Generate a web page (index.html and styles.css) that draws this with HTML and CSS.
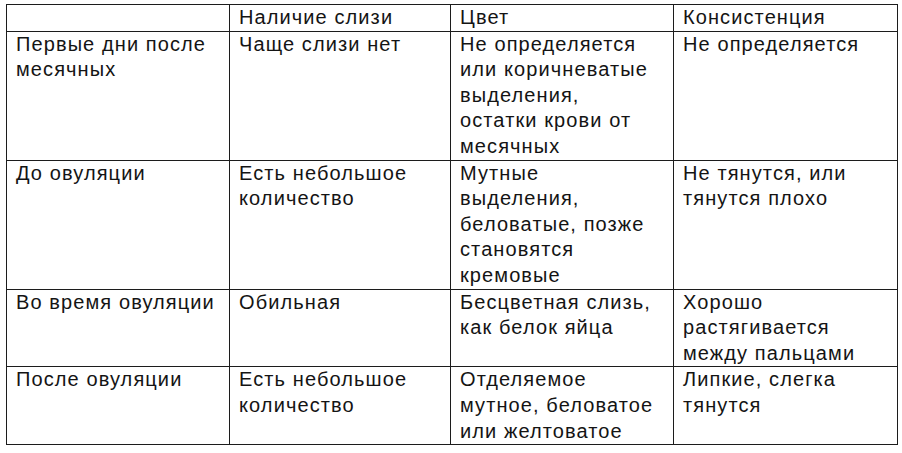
FILE: index.html
```html
<!DOCTYPE html>
<html lang="ru">
<head>
<meta charset="utf-8">
<link rel="stylesheet" href="styles.css">
</head>
<body>
<table class="grid">
  <colgroup>
    <col class="c1"><col class="c2"><col class="c3"><col class="c4">
  </colgroup>
  <tr>
    <td></td>
    <td>Наличие слизи</td>
    <td>Цвет</td>
    <td>Консистенция</td>
  </tr>
  <tr>
    <td>Первые дни после<br>месячных</td>
    <td>Чаще слизи нет</td>
    <td>Не определяется<br>или коричневатые<br>выделения,<br>остатки крови от<br>месячных</td>
    <td>Не определяется</td>
  </tr>
  <tr>
    <td>До овуляции</td>
    <td>Есть небольшое<br>количество</td>
    <td>Мутные<br>выделения,<br>беловатые, позже<br>становятся<br>кремовые</td>
    <td>Не тянутся, или<br>тянутся плохо</td>
  </tr>
  <tr>
    <td>Во время овуляции</td>
    <td>Обильная</td>
    <td>Бесцветная слизь,<br>как белок яйца</td>
    <td>Хорошо<br>растягивается<br>между пальцами</td>
  </tr>
  <tr>
    <td>После овуляции</td>
    <td>Есть небольшое<br>количество</td>
    <td>Отделяемое<br>мутное, беловатое<br>или желтоватое</td>
    <td>Липкие, слегка<br>тянутся</td>
  </tr>
</table>
</body>
</html>
```

FILE: styles.css
```css
html, body {
  margin: 0;
  background: #ffffff;
}
body {
  padding: 4px 0 0 6px;
  font-family: "Liberation Sans", Arial, sans-serif;
  font-size: 20px;
  line-height: 25.6px;
  letter-spacing: 1.1px;
  color: #141414;
}
.grid {
  border-collapse: collapse;
  table-layout: fixed;
  width: 891px;
}
.c1 { width: 223px; }
.c2 { width: 221px; }
.c3 { width: 223px; }
.c4 { width: 224px; }
.grid td {
  border: 1px solid #1c1c1c;
  padding: 0 0 0 9px;
  vertical-align: top;
  text-align: left;
  white-space: nowrap;
}
```
